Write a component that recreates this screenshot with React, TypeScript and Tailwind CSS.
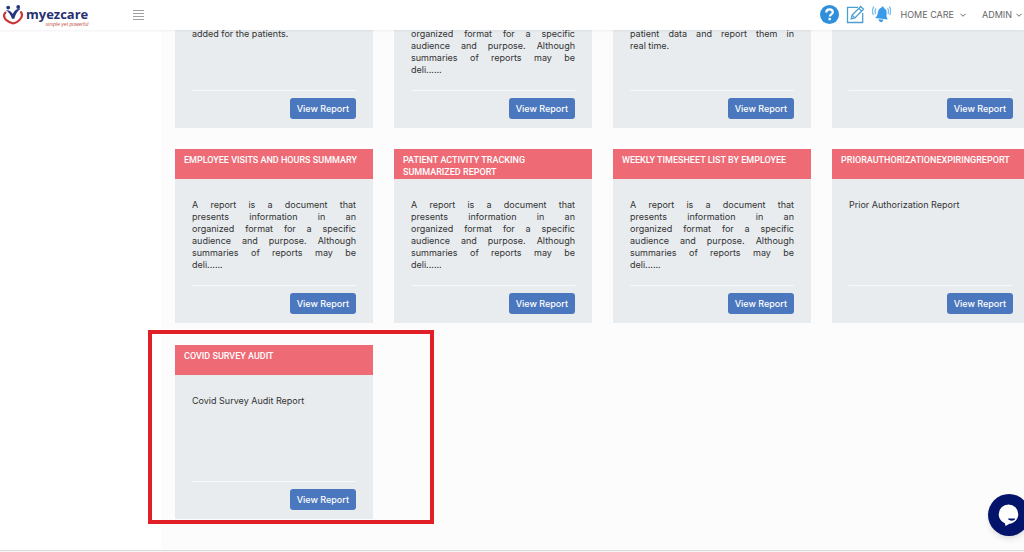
import React from "react";

type Report = {
  title?: string;
  lines: string[];
  highlighted?: boolean;
};

const summaryEnd = [
  "organized format for a specific",
  "audience and purpose. Although",
  "summaries of reports may be",
  "deli......",
];

const summary = [
  "A report is a document that",
  "presents information in an",
  ...summaryEnd,
];

const scrolledReports: Report[] = [
  { lines: ["added for the patients."] },
  { lines: summaryEnd },
  { lines: ["patient data and report them in", "real time."] },
  { lines: [] },
];

const reports: Report[] = [
  { title: "Employee Visits and Hours Summary", lines: summary },
  { title: "Patient Activity Tracking Summarized Report", lines: summary },
  { title: "Weekly Timesheet List by Employee", lines: summary },
  {
    title: "PriorAuthorizationExpiringReport",
    lines: ["Prior Authorization Report"],
  },
  {
    title: "Covid Survey Audit",
    lines: ["Covid Survey Audit Report"],
    highlighted: true,
  },
];

function Logo() {
  return (
    <a href="#" className="flex items-center gap-[3px]">
      <svg viewBox="0 0 20 20" className="h-5 w-5" fill="none">
        <circle cx="5.2" cy="2.6" r="1.9" fill="#27347f" />
        <circle cx="15.2" cy="2" r="1.9" fill="#27347f" />
        <path
          d="M2.800 5.200c3.200-.3 5.600 1.200 7 3.900C11.200 5.800 13.400 3.600 17.600 3.800c-2.900 1.900-4.900 5-6.300 9.900H8.900C7.800 9.800 5.900 7 2.800 5.200Z"
          fill="#27347f"
        />
        <path
          d="M2.400 7.600C.2 9.600.8 12.800 3.400 15.200c2 1.700 4.200 3 6.400 3.100 2.800-.1 5.600-2 7.600-4.400 2-2.500 2-4.900.6-6.700"
          stroke="#c9373b"
          strokeWidth="2.200"
          strokeLinecap="round"
        />
      </svg>
      <span className="flex flex-col pt-1">
        <span className="font-['Open_Sans',sans-serif] text-[13px] leading-3 font-bold text-[#27306f]">
          myezcare
        </span>
        <span className="mt-0.5 self-end font-['Liberation_Sans',sans-serif] text-[5px] leading-[5px] text-[#c4534c] italic">
          simple yet powerful
        </span>
      </span>
    </a>
  );
}

function Chevron() {
  return (
    <svg viewBox="0 0 6 6" className="h-1.5 w-1.5" fill="none">
      <path d="M0.500 1.800 3 4.300 5.500 1.800" stroke="#666" strokeWidth="1" />
    </svg>
  );
}

function Header() {
  return (
    <header className="sticky top-0 z-20 flex h-[30px] items-center bg-white pr-0.5 pl-[3px] shadow-[0_1px_3px_rgba(0,0,0,0.06)]">
      <div className="flex w-[130px] items-center">
        <Logo />
      </div>
      <button type="button" aria-label="Toggle menu">
        <svg viewBox="0 0 11 10" className="h-2.5 w-[11px]">
          <path
            d="M0 .5h11M0 3.500h11M0 6.500h11M0 9.500h11"
            stroke="#a0a0a0"
            strokeWidth="1"
          />
        </svg>
      </button>
      <nav className="ml-auto flex items-center">
        <div className="mr-2.5 flex items-center gap-[7px] pb-0.5">
          <button type="button" aria-label="Help">
            <svg viewBox="0 0 19 19" className="h-[19px] w-[19px]" fill="none">
              <circle cx="9.500" cy="9.500" r="9.500" fill="#2f8fdb" />
              <path
                d="M6.300 7.400c0-1.900 1.300-3 3.200-3s3.300 1.100 3.300 2.800c0 2.200-3 2.200-3 4.300"
                stroke="#fff"
                strokeWidth="2.200"
              />
              <circle cx="9.700" cy="14.100" r="1.400" fill="#fff" />
            </svg>
          </button>
          <button type="button" aria-label="Edit">
            <svg
              viewBox="0 0 19 19"
              className="h-[19px] w-[19px]"
              fill="none"
              stroke="#4ba0cf"
              strokeWidth="1.300"
            >
              <path d="M12 2.300H1.500v15.200h15.200V8" />
              <path d="m5.200 13.800.9-3.700L14.700 1.500l2.800 2.800-8.600 8.600-3.700.9Z" />
              <path d="m12.800 3.400 2.800 2.800M6.100 10.100l2.800 2.800" />
            </svg>
          </button>
          <button type="button" aria-label="Notifications">
            <svg viewBox="0 0 19 19" className="h-[19px] w-[19px]" fill="none">
              <path
                d="M10.500 1.600c.9 0 1.300.5 1.300 1.300 2.400 1 3.200 3 2.800 5.800-.3 2.300 0 3.900 1.200 5.700L3 12.900c1.800-1.300 2.500-2.700 2.800-4.900.4-3 1.400-4.700 3.700-5.200 0-.8.300-1.200 1-1.200Z"
                fill="#3a9be8"
              />
              <path
                d="m6.600 14.200 4.800.6c-.3 1.700-1.400 2.500-2.600 2.300s-2.200-1.300-2.200-2.900Z"
                fill="#3a9be8"
              />
              <path
                d="M4.100 3.300C2.900 4.800 2.900 7.200 3.700 8.900M1.900 1.700C.3 4 .3 7.600 1.500 10M15.500 3.300c1.200 1.500 1.200 3.900.5 5.600M17.300 1.700c1.600 2.300 1.600 5.900.4 8.300"
                stroke="#7dbdec"
                strokeWidth="1.300"
              />
            </svg>
          </button>
        </div>
        <button
          type="button"
          className="mr-4 flex items-center gap-1.5 text-[9px] text-[#666]"
        >
          HOME CARE <Chevron />
        </button>
        <button
          type="button"
          className="flex items-center gap-1 text-[9px] text-[#666]"
        >
          ADMIN <Chevron />
        </button>
      </nav>
    </header>
  );
}

function Description({ lines }: { lines: string[] }) {
  return (
    <p className="text-[9px] leading-3 text-[#333]">
      {lines.map((line, i) => (
        <span
          key={line}
          className={
            i < lines.length - 1
              ? "block text-justify [text-align-last:justify]"
              : "block"
          }
        >
          {line}{" "}
        </span>
      ))}
    </p>
  );
}

function CardFooter() {
  return (
    <div className="mt-auto flex justify-end border-t border-[#f7f8f9] pt-[7px] pb-[9px]">
      <button
        type="button"
        className="h-[21px] rounded-[3px] bg-[#4b77be] px-[7px] text-[9px] font-medium text-white"
      >
        View Report
      </button>
    </div>
  );
}

function ReportCard({ title, lines, highlighted }: Report) {
  return (
    <article className="relative flex h-[174px] flex-col bg-[#e8ecef]">
      <h2 className="h-[30px] bg-[#ee6b76] px-[9px] pt-[5px] font-[Roboto,sans-serif] text-[9px] leading-3 font-medium text-white uppercase">
        {title}
      </h2>
      <div className="flex flex-1 flex-col px-[17px] pt-5">
        <Description lines={lines} />
        <CardFooter />
      </div>
      {highlighted && (
        <div className="pointer-events-none absolute -top-[15px] -right-[61px] -bottom-[5px] -left-[27px] border-4 border-[#e01f27]" />
      )}
    </article>
  );
}

function ChatButton() {
  return (
    <button
      type="button"
      aria-label="Open chat"
      className="fixed -right-1.5 bottom-4 z-30 h-[42px] w-[42px] rounded-full bg-[#04146b] shadow-md"
    >
      <svg viewBox="0 0 42 42" className="h-full w-full" fill="none">
        <path
          d="M20.500 10.500a9.800 9.800 0 0 1 9.800 9.800c0 5-4 9-8.800 9.500L17.500 32l-.6-2.700c-3.500-1.500-6.200-5-6.200-9a9.800 9.800 0 0 1 9.800-9.800Z"
          fill="#fff"
        />
        <path
          d="M20.500 25c1.800 1.600 4.800 1.600 6.200 0Z"
          fill="#04146b"
          stroke="#04146b"
        />
      </svg>
    </button>
  );
}

export default function App() {
  return (
    <div className="flex min-h-screen flex-col overflow-x-clip bg-white font-[Inter,sans-serif]">
      <Header />
      <div className="flex flex-1">
        <aside className="w-[161px] shrink-0" />
        <main className="flex-1 bg-[#fcfcfc] pl-3.5">
          <div className="-mr-1.5 grid grid-cols-4 gap-x-[21px]">
            {scrolledReports.map(({ lines }, i) => (
              <article
                key={i}
                className="flex h-[98px] flex-col bg-[#e8ecef] px-[17px]"
              >
                <div className="-mt-0.5">
                  <Description lines={lines} />
                </div>
                <CardFooter />
              </article>
            ))}
          </div>
          <div className="mt-[21px] -mr-1.5 grid grid-cols-4 gap-x-[21px] gap-y-[22px]">
            {reports.map((report) => (
              <ReportCard key={report.title} {...report} />
            ))}
          </div>
        </main>
      </div>
      <footer className="h-0.5 border-t border-[#dcdcdc] bg-[#f5f5f5]" />
      <ChatButton />
    </div>
  );
}
